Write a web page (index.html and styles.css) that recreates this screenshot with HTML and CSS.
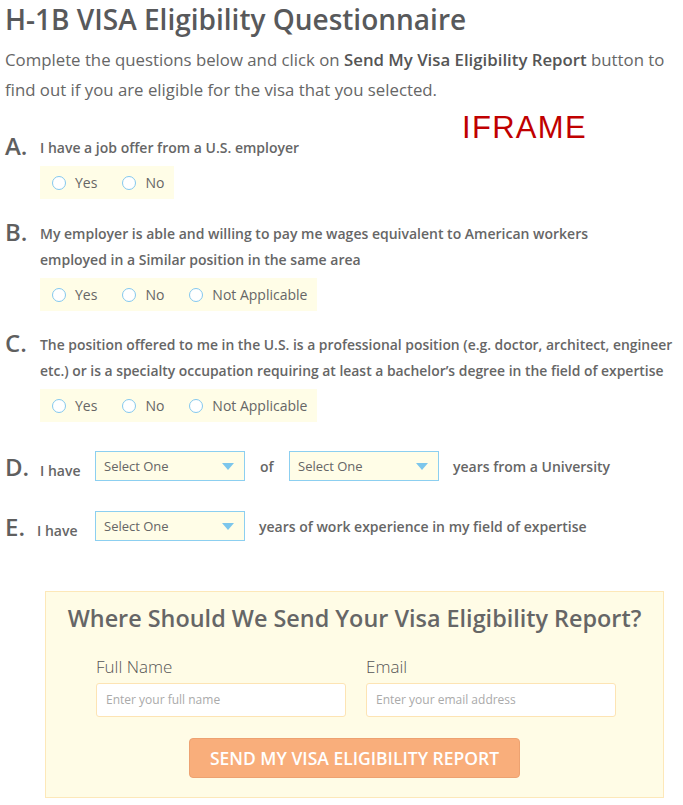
FILE: index.html
```html
<!DOCTYPE html>
<html lang="en">
<head>
<meta charset="utf-8">
<title>H-1B VISA Eligibility Questionnaire</title>
<link rel="stylesheet" href="styles.css">
</head>
<body>
<div class="page">
  <h1 class="title">H-1B VISA Eligibility Questionnaire</h1>
  <p class="intro">Complete the questions below and click on <b>Send My Visa Eligibility Report</b> button to find out if you are eligible for the visa that you selected.</p>
  <div class="iframe-label">IFRAME</div>

  <div class="question q-a">
    <div class="letter">A.</div>
    <div class="q-body">
      <div class="q-text">I have a job offer from a U.S. employer</div>
      <div class="options">
        <label class="opt"><span class="radio"></span>Yes</label>
        <label class="opt"><span class="radio"></span>No</label>
      </div>
    </div>
  </div>

  <div class="question q-b">
    <div class="letter">B.</div>
    <div class="q-body">
      <div class="q-text">My employer is able and willing to pay me wages equivalent to American workers<br>employed in a Similar position in the same area</div>
      <div class="options">
        <label class="opt"><span class="radio"></span>Yes</label>
        <label class="opt"><span class="radio"></span>No</label>
        <label class="opt"><span class="radio"></span>Not Applicable</label>
      </div>
    </div>
  </div>

  <div class="question q-c">
    <div class="letter">C.</div>
    <div class="q-body">
      <div class="q-text">The position offered to me in the U.S. is a professional position (e.g. doctor, architect, engineer<br>etc.) or is a specialty occupation requiring at least a bachelor’s degree in the field of expertise</div>
      <div class="options">
        <label class="opt"><span class="radio"></span>Yes</label>
        <label class="opt"><span class="radio"></span>No</label>
        <label class="opt"><span class="radio"></span>Not Applicable</label>
      </div>
    </div>
  </div>

  <div class="row-q q-d">
    <div class="letter">D.</div>
    <span class="row-text ihave">I have</span>
    <div class="select"><span>Select One</span><span class="arrow"></span></div>
    <span class="row-text of">of</span>
    <div class="select"><span>Select One</span><span class="arrow"></span></div>
    <span class="row-text after">years from a University</span>
  </div>

  <div class="row-q q-e">
    <div class="letter">E.</div>
    <span class="row-text ihave-e">I have</span>
    <div class="select"><span>Select One</span><span class="arrow"></span></div>
    <span class="row-text after-e">years of work experience in my field of expertise</span>
  </div>

  <div class="report">
    <h2 class="report-title">Where Should We Send Your Visa Eligibility Report?</h2>
    <div class="fields">
      <div class="field">
        <div class="field-label">Full Name</div>
        <div class="input">Enter your full name</div>
      </div>
      <div class="field">
        <div class="field-label">Email</div>
        <div class="input">Enter your email address</div>
      </div>
    </div>
    <div class="btn-wrap">
      <div class="btn">SEND MY VISA ELIGIBILITY REPORT</div>
    </div>
  </div>
</div>
</body>
</html>
```
FILE: styles.css
```css
* { box-sizing: border-box; }
html, body { margin: 0; padding: 0; background: #ffffff; }
body {
  font-family: "Open Sans", "Lato", sans-serif;
  color: #666666;
}
.page {
  position: relative;
  padding: 0 0 0 5px;
  width: 683px;
}
.title {
  margin: 0;
  font-size: 28px;
  line-height: 38px;
  font-weight: 600;
  color: #58595b;
}
.intro {
  margin: 7px 0 0;
  max-width: 672px;
  font-size: 16.8px;
  line-height: 30px;
  color: #666;
}
.intro b { font-weight: 600; color: #555; }
.iframe-label {
  position: absolute;
  left: 462px;
  top: 108px;
  font-family: "Liberation Sans", sans-serif;
  font-size: 31px;
  line-height: 40px;
  color: #c00000;
  letter-spacing: 1.3px;
}
.question {
  display: flex;
  align-items: flex-start;
}
.q-a { margin-top: 30px; }
.q-b { margin-top: 22px; }
.q-c { margin-top: 21px; }
.letter {
  width: 35px;
  flex: none;
  font-size: 24px;
  line-height: 26px;
  font-weight: 600;
  color: #5f5f5f;
  margin-top: -2px;
}
.q-text {
  font-size: 14px;
  line-height: 26px;
  font-weight: 600;
  color: #666;
}
.q-c .q-text { font-size: 13.9px; }
.options {
  display: inline-flex;
  align-items: center;
  margin-top: 5px;
  height: 33px;
  padding: 0 10px 0 12px;
  background: #fffde7;
  gap: 25px;
  font-size: 14px;
  color: #666;
}
.opt {
  display: inline-flex;
  align-items: center;
}
.radio {
  width: 14px;
  height: 14px;
  border: 1.5px solid #84c8ee;
  border-radius: 50%;
  background: #fff;
  margin-right: 9px;
}
.row-q {
  display: flex;
  align-items: center;
  height: 30px;
}
.row-q .letter { margin-top: 2px; }
.q-d { margin-top: 29px; }
.q-e { margin-top: 30px; }
.row-text {
  font-size: 14px;
  font-weight: 600;
  color: #666;
}
.ihave { width: 55px; padding-top: 8px; }
.ihave-e { width: 58px; margin-left: -3px; padding-top: 8px; }
.of { width: 44px; padding-left: 15px; }
.after { padding-left: 14px; }
.after-e { padding-left: 14px; }
.select {
  width: 150px;
  height: 30px;
  border: 1.5px solid #8ccff0;
  background: #fffde7;
  display: flex;
  align-items: center;
  justify-content: space-between;
  padding: 0 10px 0 8px;
  font-size: 13px;
  color: #666;
}
.arrow {
  width: 0;
  height: 0;
  border-left: 6px solid transparent;
  border-right: 6px solid transparent;
  border-top: 7px solid #7cc6ec;
}
.report {
  margin: 50px 0 0 40px;
  width: 619px;
  background: #fffce6;
  border: 1px solid #fde8b9;
  padding: 10px 0 19px;
}
.report-title {
  margin: 0;
  text-align: center;
  font-size: 23.4px;
  line-height: 32px;
  font-weight: 600;
  color: #666;
}
.fields {
  display: flex;
  gap: 20px;
  padding: 22px 0 0 50px;
}
.field { width: 250px; }
.field-label {
  font-size: 17px;
  line-height: 22px;
  font-weight: 300;
  color: #555;
  margin-bottom: 5px;
}
.input {
  height: 34px;
  background: #fff;
  border: 1px solid #fde4b4;
  border-radius: 3px;
  padding: 0 9px;
  font-size: 12px;
  line-height: 32px;
  color: #aaa;
}
.btn-wrap {
  display: flex;
  justify-content: center;
  margin-top: 21px;
}
.btn {
  width: 331px;
  height: 40px;
  background: #f9ae7b;
  border: 1px solid #eda271;
  border-radius: 4px;
  color: #fff;
  font-size: 17.5px;
  font-weight: 600;
  line-height: 38px;
  text-align: center;
}
```
